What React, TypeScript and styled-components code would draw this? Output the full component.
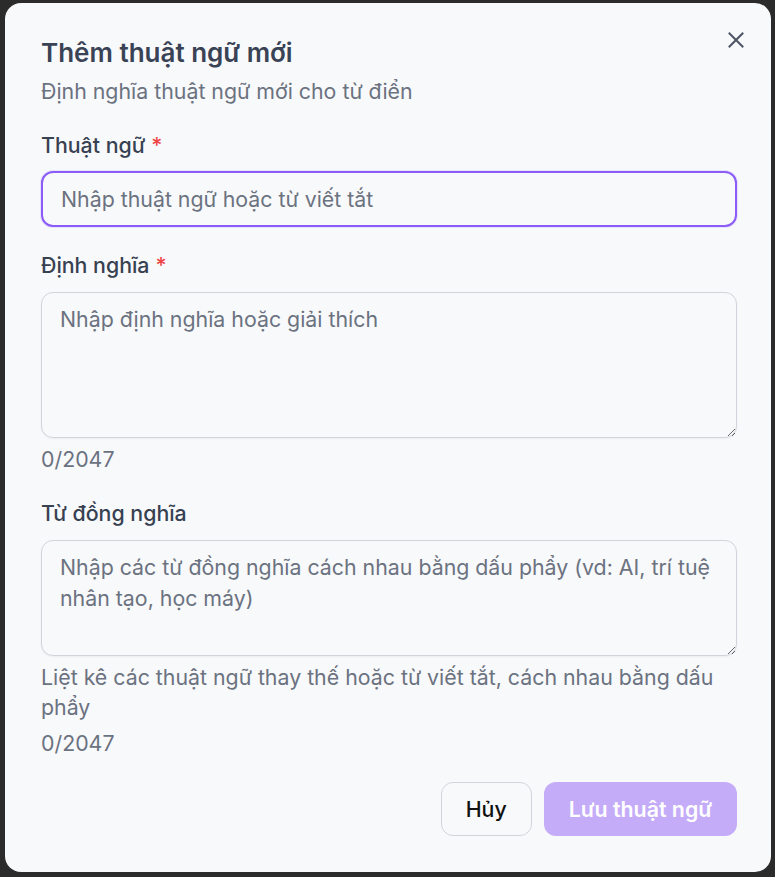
import React from "react";
import styled, { createGlobalStyle } from "styled-components";

const Global = createGlobalStyle`
  html, body { margin: 0; padding: 0; background: #2b2b2b; }
  body { font-family: Inter, "Noto Sans", sans-serif; }
  * { box-sizing: border-box; }
`;

const Backdrop = styled.div`
  width: 775px;
  height: 877px;
  padding: 3px 4px 5px 5px;
  background: #2b2b2b;
`;

const Dialog = styled.div`
  position: relative;
  width: 766px;
  height: 869px;
  background: #f8f9fb;
  border-radius: 16px;
  padding: 34px 34px 0 36px;
  display: flex;
  flex-direction: column;
`;

const Title = styled.h2`
  margin: 0;
  font-size: 26px;
  line-height: 32px;
  font-weight: 600;
  color: #3a4356;
`;

const Subtitle = styled.p`
  margin: 8px 0 0;
  font-size: 21.33px;
  line-height: 28px;
  color: #6b7280;
`;

const CloseButton = styled.button`
  position: absolute;
  top: 25px;
  right: 23px;
  width: 24px;
  height: 24px;
  padding: 0;
  border: none;
  background: transparent;
  display: flex;
  align-items: center;
  justify-content: center;
  color: #4b5563;
  cursor: pointer;
`;

const Field = styled.div<{ $top: number }>`
  margin-top: ${(p) => p.$top}px;
  display: flex;
  flex-direction: column;
`;

const Label = styled.label`
  font-size: 21.33px;
  line-height: 28px;
  font-weight: 500;
  color: #374151;
`;

const Required = styled.span`
  color: #ef4444;
  margin-left: 6px;
`;

const TextInput = styled.input`
  margin-top: 12px;
  width: 100%;
  height: 56px;
  border: 2px solid #8b5cf6;
  border-radius: 12px;
  background: #f8f9fb;
  padding: 0 18px;
  font-family: Inter, "Noto Sans", sans-serif;
  font-size: 21.33px;
  color: #111827;
  outline: none;
  box-shadow: 0 0 0 1px rgba(139, 92, 246, 0.15);
  &::placeholder { color: #6b7280; }
`;

const TextArea = styled.textarea<{ $h: number }>`
  margin-top: 13px;
  width: 100%;
  height: ${(p) => p.$h}px;
  border: 1px solid #d1d5db;
  border-radius: 12px;
  background: #f8f9fb;
  padding: 11px 18px;
  font-family: Inter, "Noto Sans", sans-serif;
  font-size: 21.33px;
  line-height: 31px;
  color: #111827;
  outline: none;
  resize: vertical;
  box-shadow: 0 1px 2px rgba(0, 0, 0, 0.05);
  &::placeholder { color: #6b7280; }
`;

const Hint = styled.p<{ $top: number }>`
  margin: ${(p) => p.$top}px 0 0;
  font-size: 21.33px;
  line-height: 30px;
  color: #6b7280;
`;

const Footer = styled.div`
  margin-top: 24px;
  display: flex;
  justify-content: flex-end;
  gap: 12px;
`;

const Button = styled.button<{ $primary?: boolean }>`
  height: 54px;
  padding: 0 24px;
  border-radius: 12px;
  font-family: Inter, "Noto Sans", sans-serif;
  font-size: 21.33px;
  font-weight: ${(p) => (p.$primary ? 600 : 500)};
  border: 1px solid ${(p) => (p.$primary ? "transparent" : "#d1d5db")};
  background: ${(p) => (p.$primary ? "#c4acf8" : "#f8f9fb")};
  color: ${(p) => (p.$primary ? "#ffffff" : "#111111")};
  cursor: pointer;
`;

export default function App() {
  return (
    <>
      <Global />
      <Backdrop>
        <Dialog>
          <CloseButton aria-label="Đóng">
            <svg width="16" height="16" viewBox="0 0 16 16" fill="none">
              <path d="M1.5 1.5 L14.5 14.5 M14.5 1.5 L1.5 14.5" stroke="currentColor" strokeWidth="2" strokeLinecap="square" />
            </svg>
          </CloseButton>
          <Title>Thêm thuật ngữ mới</Title>
          <Subtitle>Định nghĩa thuật ngữ mới cho từ điển</Subtitle>

          <Field $top={26}>
            <Label>
              Thuật ngữ<Required>*</Required>
            </Label>
            <TextInput placeholder="Nhập thuật ngữ hoặc từ viết tắt" />
          </Field>

          <Field $top={24}>
            <Label>
              Định nghĩa<Required>*</Required>
            </Label>
            <TextArea $h={146} placeholder="Nhập định nghĩa hoặc giải thích" />
            <Hint $top={6}>0/2047</Hint>
          </Field>

          <Field $top={25}>
            <Label>Từ đồng nghĩa</Label>
            <TextArea $h={116} placeholder="Nhập các từ đồng nghĩa cách nhau bằng dấu phẩy (vd: AI, trí tuệ nhân tạo, học máy)" />
            <Hint $top={6}>Liệt kê các thuật ngữ thay thế hoặc từ viết tắt, cách nhau bằng dấu phẩy</Hint>
            <Hint $top={6}>0/2047</Hint>
          </Field>

          <Footer>
            <Button>Hủy</Button>
            <Button $primary>Lưu thuật ngữ</Button>
          </Footer>
        </Dialog>
      </Backdrop>
    </>
  );
}
